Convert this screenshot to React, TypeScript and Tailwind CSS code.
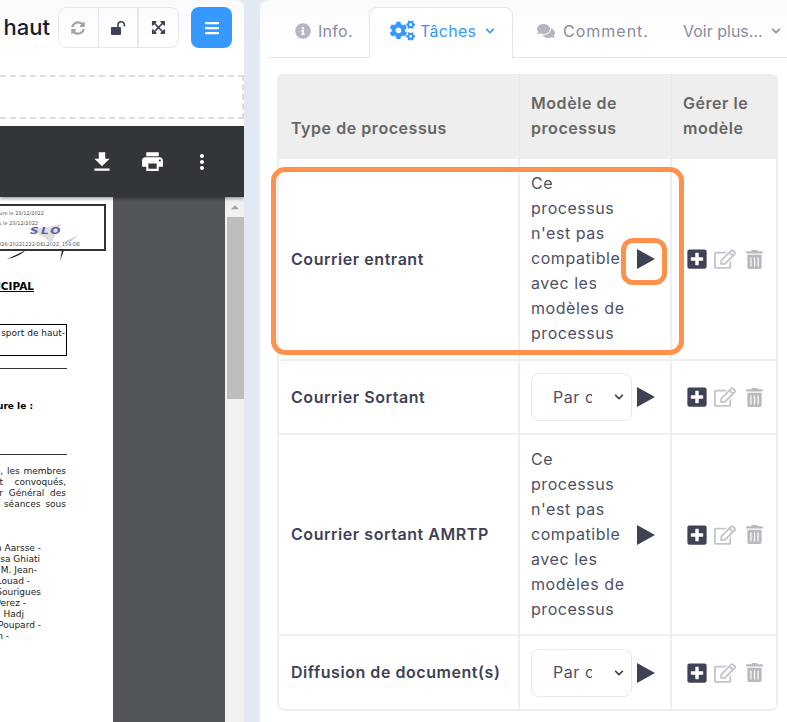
import { FaCogs, FaComments, FaInfoCircle, FaChevronDown, FaSyncAlt, FaExpandArrowsAlt, FaBars, FaPlusSquare, FaRegEdit, FaTrashAlt, FaCaretUp } from "react-icons/fa";
import { MdFileDownload, MdPrint, MdMoreVert } from "react-icons/md";

const list: [string, string][] = [
  ["Hugues van Aarsse -", "w-[41px]"],
  ["Mme Vanessa Ghiati", "w-[40px]"],
  ["M. Jean-", "w-[37px]"],
  ["Mme Louad -", "w-[30px]"],
  ["M. Sourigues", "w-[41px]"],
  ["M. Perez -", "w-[26px]"],
  ["M. Hadj", "w-[24px]"],
  ["M. Poupard -", "w-[41px]"],
  ["M. Martin -", "w-[9px]"],
];

const para: [string, string][] = [
  ["Le 22 décembre, les membres", "w-[66px] [word-spacing:1px]"],
  ["se sont\u00a0\u00a0\u00a0convoqués,", "w-[66px] [word-spacing:1px]"],
  ["le Directeur Général des", "w-[66px] [word-spacing:3px]"],
  ["de ses séances sous", "w-[66px] [word-spacing:2px]"],
];

function Cut({ text, cls }: { text: string; cls: string }) {
  return (
    <div className={`flex justify-end overflow-hidden whitespace-nowrap ${cls}`}>
      <span className="shrink-0">{text}</span>
    </div>
  );
}

function Paper() {
  return (
    <div className="w-[113px] shrink-0 bg-white overflow-hidden flex flex-col font-['DejaVu_Sans',sans-serif] text-[#222]">
      <div className="relative mt-[7px] w-[106px] h-[47px] border-2 border-l-0 border-[#333] flex flex-col text-[5px] leading-[11px]">
        <div className="flex justify-end overflow-hidden whitespace-nowrap w-[44px] mt-[2px] text-[#555]"><span className="shrink-0">Affiché sure le 23/12/2022</span></div>
        <div className="flex justify-end overflow-hidden whitespace-nowrap w-[38px] text-[#555]"><span className="shrink-0">Reçu le 23/12/2022</span></div>
        <div className="h-[10px]" />
        <div className="flex justify-end overflow-hidden whitespace-nowrap w-[80px] text-[#555]"><span className="shrink-0">026-20221222-DEL2022_159-DE</span></div>
        <svg className="absolute left-0 top-[8px] w-[80px] h-[54px]" viewBox="0 0 80 54" fill="none">
          <path d="M26 14 C38 16 50 12 62 10 C58 14 56 18 52 30 C46 24 36 18 26 14Z" fill="#dedede" />
          <path d="M7 45 C14 42 20 39 26 36 C22 40 14 44 7 45Z" fill="#222" />
          <path d="M60 47 L62 36 L64 36 Z" fill="#222" />
          <path d="M64 28 L79 21 L70 28 Z" fill="#c9cbe4" />
        </svg>
        <span className="absolute left-[30px] top-[21px] origin-left scale-x-150 text-[8px] leading-[10px] font-bold italic tracking-[1.5px] text-[#5a5fa8]">SLO</span>
      </div>
      <div className="mt-[29px] w-[34px] flex justify-end overflow-hidden whitespace-nowrap text-[10.5px] leading-[13px] font-bold underline text-black"><span className="shrink-0">MUNICIPAL</span></div>
      <div className="mt-[31px] w-[67px] h-[32px] border border-l-0 border-black flex justify-end text-[9px] leading-[11px] pt-[3px] pr-[1px] overflow-hidden whitespace-nowrap"><span className="shrink-0">du sport de haut-</span></div>
      <div className="mt-[12px] w-[67px] h-px bg-[#333]" />
      <div className="mt-[32px] w-[33px] flex justify-end overflow-hidden whitespace-nowrap text-[9px] leading-[11px] font-bold text-black"><span className="shrink-0">Séance ure le :</span></div>
      <div className="mt-[42px] w-[67px] h-px bg-[#333]" />
      <div className="mt-[11px] text-[9px] leading-[11px]">
        {para.map(([t, c]) => <Cut key={t} text={t} cls={c} />)}
      </div>
      <div className="mt-[33px] text-[9px] leading-[11px]">
        {list.map(([t, c]) => <Cut key={t} text={t} cls={c} />)}
      </div>
    </div>
  );
}

function Unlock() {
  return (
    <svg className="w-[15px] h-[14px] text-[#3f4254]" viewBox="0 0 15 14" fill="none">
      <rect x="0" y="6" width="10" height="8" rx="1" fill="currentColor" />
      <path d="M7 6 V4 A3 3 0 0 1 13.4 4 V5.5" stroke="currentColor" strokeWidth="1.6" />
    </svg>
  );
}

function Left() {
  return (
    <div className="w-[244px] shrink-0 flex flex-col bg-gradient-to-b from-[#fafafc] to-white to-[40px] rounded-tr-[8px] overflow-hidden">
      <div className="pt-[7px] pr-[12px] flex items-center justify-end h-[48px]">
        <span className="text-[22px] leading-[41px] font-medium text-[#181c32] mr-[8px]">haut</span>
        <div className="flex h-[41px] w-[121px] border border-[#e6e6f0] rounded-[8px] mr-[12px]">
          <div className="flex-1 flex items-center justify-center border-r border-[#e6e6f0]"><FaSyncAlt className="text-[14px] text-[#a1a1ad]" /></div>
          <div className="flex-1 flex items-center justify-center border-r-2 border-[#e6e6f0]"><Unlock /></div>
          <div className="flex-1 flex items-center justify-center"><FaExpandArrowsAlt className="text-[15px] text-[#3f4254]" /></div>
        </div>
        <div className="w-[41px] h-[41px] rounded-[8px] bg-[#3699ff] flex items-center justify-center"><FaBars className="text-[16px] text-white" /></div>
      </div>
      <div className="mt-[27px] h-[44px] border-2 border-l-0 border-dashed border-[#dddddd]" />
      <div className="mt-[7px] h-[71px] bg-[#323639] flex items-center justify-end pr-[17px] text-white shadow-[0_2px_3px_rgba(0,0,0,0.35)] relative z-10">
        <div className="w-[50px] flex justify-center"><MdFileDownload className="text-[26px]" /></div>
        <div className="w-[50px] flex justify-center"><MdPrint className="text-[25px]" /></div>
        <div className="w-[50px] flex justify-center"><MdMoreVert className="text-[24px]" /></div>
      </div>
      <div className="flex-1 flex bg-[#525659] min-h-0">
        <Paper />
        <div className="flex-1" />
        <div className="w-[19px] shrink-0 bg-[#f1f1f1] flex flex-col items-end">
          <div className="w-full h-[19px] flex items-center justify-center"><FaCaretUp className="text-[12px] text-[#a3a3a3]" /></div>
          <div className="w-[17px] h-[182px] mt-[1px] bg-[#bdbdbd]" />
        </div>
      </div>
    </div>
  );
}

function Tabs() {
  return (
    <div className="h-[58px] ml-[8px] pt-[7px] flex border-b border-[#e4e4ef] text-[16px] text-[#8b8b9f]">
      <div className="w-[101px] flex items-center pl-[27px] h-[48px]">
        <FaInfoCircle className="text-[16px] text-[#b5b5c3] mr-[7px]" />
        <span className="tracking-[0.3px]">Info.</span>
      </div>
      <div className="w-[144px] h-[51px] pb-[5px] border border-b-0 border-[#e4e4ef] rounded-t-[8px] bg-white flex items-center pl-[20px] text-[#3699ff]">
        <FaCogs className="text-[25px] mr-[5px]" />
        <span className="tracking-[0.3px]">Tâches</span>
        <FaChevronDown className="text-[10px] ml-[9px]" />
      </div>
      <div className="w-[170px] flex items-center pl-[24px] h-[48px]">
        <FaComments className="text-[18px] text-[#b5b5c3] mr-[8px]" />
        <span className="tracking-[1px]">Comment.</span>
      </div>
      <div className="flex items-center h-[48px] whitespace-nowrap">
        <span>Voir plus...</span>
        <FaChevronDown className="text-[10px] ml-[8px]" />
      </div>
    </div>
  );
}

function Actions() {
  return (
    <div className="flex items-center pl-[14px]">
      <FaPlusSquare className="text-[22px] text-[#3f4254]" />
      <FaRegEdit className="text-[22px] text-[#c4c4cc] ml-[6px]" />
      <FaTrashAlt className="text-[19px] text-[#b9b9c0] ml-[9px]" />
    </div>
  );
}

function Play() {
  return (
    <svg className="w-[18px] h-[20px] shrink-0 ml-[5px] text-[#3f4254]" viewBox="0 0 18 20">
      <polygon points="0,0 18,10 0,20" fill="currentColor" />
    </svg>
  );
}

function Incompatible() {
  return (
    <div className="flex items-center py-[12px] pl-[11px] border-r-2 border-[#eeeef3]">
      <p className="w-[101px] shrink-0 whitespace-nowrap -mt-[1px]">Ce<br />processus<br />n'est pas<br />compatible<br />avec les<br />modèles de<br />processus</p>
      <Play />
    </div>
  );
}

function SelectCell() {
  return (
    <div className="flex items-center pl-[11px] border-r-2 border-[#eeeef3]">
      <div className="w-[101px] h-[48px] shrink-0 border border-[#e8e8f0] rounded-[8px] flex items-center pl-[21px]">
        <span className="w-[39px] overflow-hidden whitespace-nowrap">Par courrier</span>
        <FaChevronDown className="text-[10px] text-[#3f4254] ml-[22px]" />
      </div>
      <Play />
    </div>
  );
}

function Row({ name, kind, h, last }: { name: string; kind: "text" | "select"; h: string; last?: boolean }) {
  return (
    <div className={`grid grid-cols-[241px_152px_1fr] ${h} ${last ? "" : "border-b-2 border-[#eeeef3]"}`}>
      <div className="flex items-center pl-[12px] font-semibold text-[#3f4254] border-r-2 border-[#eeeef3] whitespace-nowrap">{name}</div>
      {kind === "text" ? <Incompatible /> : <SelectCell />}
      <Actions />
    </div>
  );
}

function Table() {
  return (
    <div className="mt-[16px] ml-[17px] w-[501px] rounded-[8px] border-2 border-t-0 border-[#eeeef3] text-[16px] tracking-[0.55px] leading-[25px] text-[#4e5166] font-['Inter',sans-serif]">
      <div className="grid grid-cols-[241px_152px_1fr] h-[85px] bg-[#eeeeee] rounded-t-[6px] font-semibold text-[#666666] -mx-[2px] px-[2px]">
        <div className="flex items-end pb-[18px] pl-[12px] border-r border-[#e9e9ec]">Type de processus</div>
        <div className="flex items-end pb-[18px] pl-[11px] border-r border-[#e9e9ec]"><span>Modèle de<br />processus</span></div>
        <div className="flex items-end pb-[18px] pl-[11px]"><span>Gérer le<br />modèle</span></div>
      </div>
      <Row name="Courrier entrant" kind="text" h="h-[202px]" />
      <Row name="Courrier Sortant" kind="select" h="h-[74px]" />
      <Row name="Courrier sortant AMRTP" kind="text" h="h-[201px]" />
      <Row name="Diffusion de document(s)" kind="select" h="h-[73px]" last />
    </div>
  );
}

export default function App() {
  return (
    <div className="relative w-[787px] h-[722px] overflow-hidden flex bg-[#e3e9f2] font-['Inter',sans-serif]">
      <Left />
      <div className="w-[16px] shrink-0" />
      <div className="flex-1 bg-gradient-to-b from-[#fafafc] to-white to-[40px] rounded-tl-[8px]">
        <Tabs />
        <Table />
      </div>
      <div className="absolute left-[271px] top-[167px] w-[413px] h-[188px] border-[5px] border-[#ff914d] rounded-[14px]" />
      <div className="absolute left-[621px] top-[238px] w-[46px] h-[47px] border-[5px] border-[#ff914d] rounded-[12px]" />
    </div>
  );
}
